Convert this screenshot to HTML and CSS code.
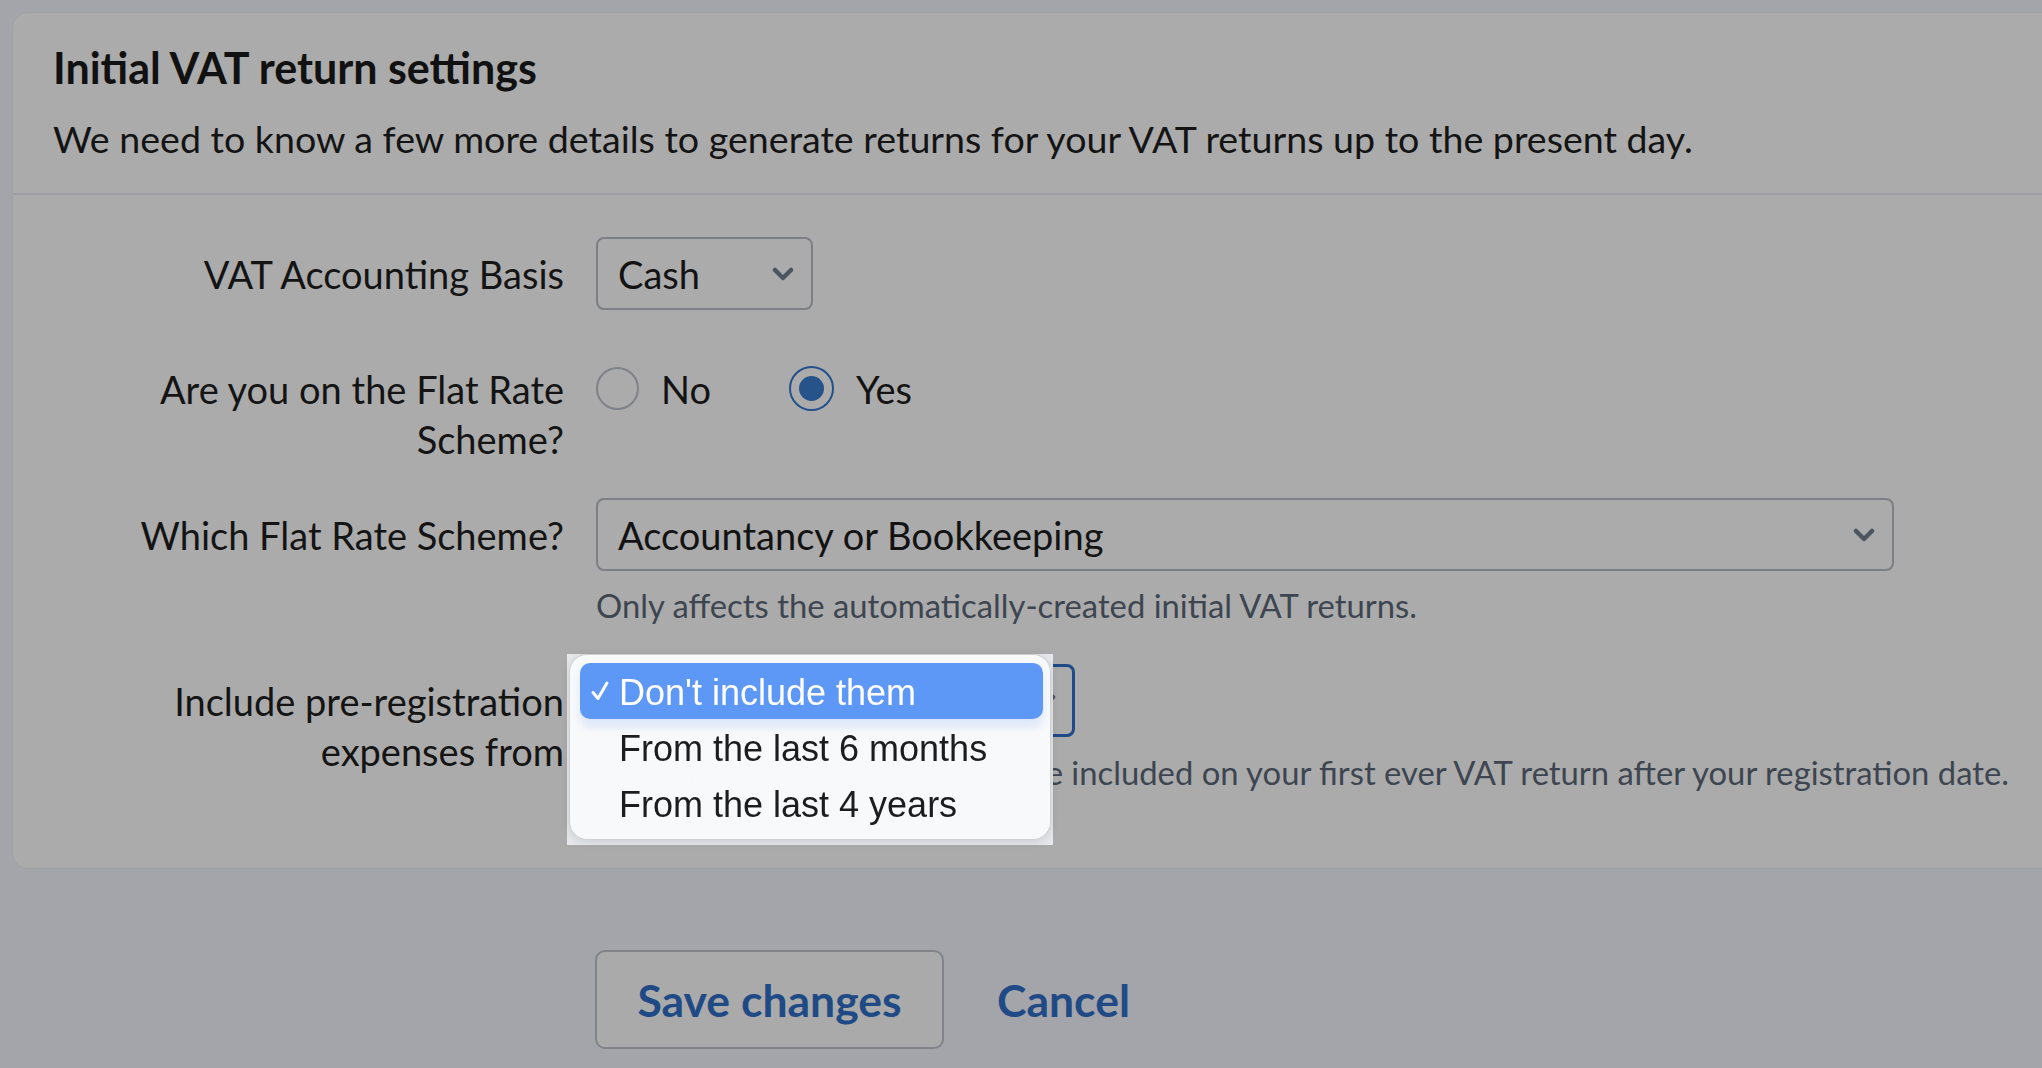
FILE: index.html
```html
<!DOCTYPE html>
<html lang="en">
<head>
<meta charset="utf-8">
<title>Initial VAT return settings</title>
<link rel="stylesheet" href="styles.css">
</head>
<body>
<div class="page">
  <section class="card">
    <header class="card-header">
      <h1 class="card-title">Initial VAT return settings</h1>
      <p class="card-subtitle">We need to know a few more details to generate returns for your VAT returns up to the present day.</p>
    </header>
    <div class="card-body">
      <div class="field field-basis">
        <label class="field-label">VAT Accounting Basis</label>
        <div class="field-control">
          <div class="select select-short">
            <span class="select-value">Cash</span>
            <svg class="chevron" viewBox="0 0 22 14" width="22" height="14"><path d="M3 3 L11 11 L19 3"/></svg>
          </div>
        </div>
      </div>

      <div class="field field-flat">
        <div class="field-label">Are you on the Flat Rate Scheme?</div>
        <div class="field-control radio-group">
          <span class="radio-option"><span class="radio"></span><span class="radio-text">No</span></span>
          <span class="radio-option"><span class="radio radio-checked"><span class="radio-dot"></span></span><span class="radio-text">Yes</span></span>
        </div>
      </div>

      <div class="field field-scheme">
        <label class="field-label">Which Flat Rate Scheme?</label>
        <div class="field-control">
          <div class="select select-full">
            <span class="select-value">Accountancy or Bookkeeping</span>
            <svg class="chevron" viewBox="0 0 22 14" width="22" height="14"><path d="M3 3 L11 11 L19 3"/></svg>
          </div>
          <p class="help">Only affects the automatically-created initial VAT returns.</p>
        </div>
      </div>

      <div class="field field-prereg">
        <label class="field-label">Include pre-registration expenses from</label>
        <div class="field-control popup-anchor">
          <div class="select select-medium select-focus">
            <span class="select-value">Don't include them</span>
            <svg class="chevron" viewBox="0 0 22 14" width="22" height="14"><path d="M3 3 L11 11 L19 3"/></svg>
          </div>
          <p class="help">Pre-registration expenses will be included on your first ever VAT return after your registration date.</p>

          <div class="menu-frame">
            <ul class="menu">
              <li class="menu-item menu-item-active">
                <svg class="menu-check" viewBox="0 0 22 22" width="22" height="22"><path d="M4 12.5 L9 18.5 L18 3"/></svg>
                <span>Don't include them</span>
              </li>
              <li class="menu-item"><span>From the last 6 months</span></li>
              <li class="menu-item"><span>From the last 4 years</span></li>
            </ul>
          </div>
        </div>
      </div>
    </div>
  </section>

  <footer class="actions">
    <button class="btn-save" type="button">Save changes</button>
    <a class="btn-cancel" href="#">Cancel</a>
  </footer>
</div>
</body>
</html>
```

FILE: styles.css
```css
* { box-sizing: border-box; }

html, body {
  margin: 0;
  padding: 0;
  height: 100%;
  overflow: hidden;
}

body {
  background: #a3a5aa;
  font-family: "Lato", "Liberation Sans", sans-serif;
  color: #131313;
}

.page {
  padding-top: 12px;
}

/* ---------- card ---------- */
.card {
  margin: 0 -60px 0 12px;
  background: #ababab;
  border: 1px solid #a0a1a5;
  border-radius: 16px;
}

.card-header {
  padding: 31px 40px 32px;
  border-bottom: 2px solid #9c9ea3;
}

.card-title {
  margin: 0;
  font-size: 43px;
  line-height: 48px;
  font-weight: 700;
  color: #111;
}

.card-subtitle {
  margin: 24px 0 0;
  font-size: 37.6px;
  line-height: 45px;
  color: #141414;
}

.card-body {
  padding: 42px 0 74px 80px;
}

/* ---------- fields ---------- */
.field {
  display: grid;
  grid-template-columns: 471px 1fr;
  column-gap: 32px;
  align-items: start;
}

.field-basis { margin-bottom: 42px; }
.field-flat { margin-bottom: 34px; }
.field-scheme { margin-bottom: 37px; }

.field-label {
  display: block;
  padding-top: 12px;
  font-size: 38px;
  line-height: 50px;
  text-align: right;
  color: #141414;
}

.field-control {
  min-width: 0;
}

.select {
  display: flex;
  align-items: center;
  justify-content: space-between;
  height: 73px;
  padding: 0 17px 0 20px;
  border: 2px solid #7c7f84;
  border-radius: 8px;
  font-size: 38px;
  line-height: 46px;
  color: #131313;
}

.select-short { width: 217px; }
.select-full { width: 1298px; }
.select-medium { width: 479px; }

.select-focus {
  border: 3px solid #1f4a87;
  padding-left: 19px;
  padding-right: 16px;
}

.chevron {
  flex: none;
  fill: none;
  stroke: #4b5661;
  stroke-width: 4.5;
  stroke-linecap: round;
  stroke-linejoin: round;
}

.help {
  margin: 13px 0 0;
  font-size: 32.8px;
  line-height: 43px;
  color: #3d4650;
  white-space: nowrap;
}

.field-prereg .help { margin-top: 14px; }

/* ---------- radios ---------- */
.radio-group {
  display: flex;
  align-items: center;
  height: 73px;
  gap: 78px;
}

.radio-option {
  display: inline-flex;
  align-items: center;
  gap: 22px;
  font-size: 38px;
  line-height: 46px;
}

.radio {
  display: inline-flex;
  align-items: center;
  justify-content: center;
  width: 43px;
  height: 43px;
  border: 2px solid #7f8287;
  border-radius: 50%;
}

.radio-checked {
  width: 45px;
  height: 45px;
  border: 2.5px solid #22518c;
}

.radio-dot {
  width: 25px;
  height: 25px;
  border-radius: 50%;
  background: #25538a;
}

/* ---------- popup menu ---------- */
.popup-anchor {
  position: relative;
}

.menu-frame {
  position: absolute;
  left: -29px;
  top: -10px;
  width: 486px;
  height: 191px;
  padding: 0 2px 5px 2px;
  background: rgba(236, 237, 240, 0.93);
  backdrop-filter: blur(4px);
}

.menu {
  list-style: none;
  margin: 0;
  height: 100%;
  padding: 8px 7px 8px 10px;
  background: rgba(250, 251, 252, 0.9);
  border: 1px solid rgba(0, 0, 0, 0.16);
  border-radius: 18px;
  box-shadow: 0 2px 8px rgba(0, 0, 0, 0.12);
  font-family: "Liberation Sans", "Arial", sans-serif;
  font-size: 36px;
  line-height: 52px;
  color: #1d1d1f;
}

.menu-item {
  position: relative;
  height: 56px;
  padding: 4px 0 0 39px;
  white-space: nowrap;
}

.menu-item-active {
  background: #5e98f6;
  color: #fff;
  border-radius: 10px;
  box-shadow: 0 8px 10px rgba(94, 152, 246, 0.18);
}

.menu-check {
  position: absolute;
  left: 9px;
  top: 17px;
  fill: none;
  stroke: #fff;
  stroke-width: 3;
  stroke-linecap: round;
  stroke-linejoin: round;
}

/* ---------- actions ---------- */
.actions {
  display: flex;
  align-items: center;
  margin-top: 81px;
  padding-left: 595px;
  gap: 53px;
}

.btn-save {
  width: 349px;
  height: 99px;
  background: #aaaaaa;
  border: 2px solid #808388;
  border-radius: 10px;
  font-family: "Lato", "Liberation Sans", sans-serif;
  font-size: 44.5px;
  font-weight: 700;
  color: #1f4a85;
  padding: 0;
}

.btn-cancel {
  font-size: 44.5px;
  font-weight: 700;
  color: #1f4a85;
  text-decoration: none;
}
```
